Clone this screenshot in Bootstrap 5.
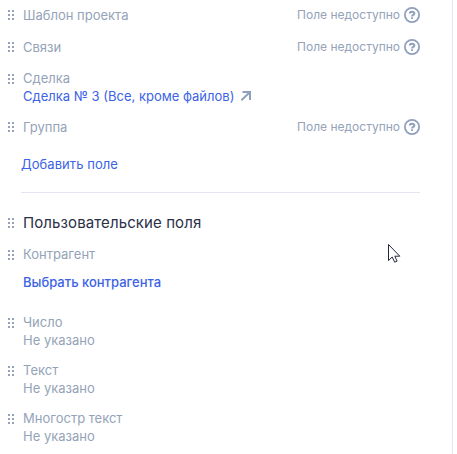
<!DOCTYPE html>
<html lang="ru">
<head>
<meta charset="utf-8">
<meta name="viewport" content="width=device-width, initial-scale=1">
<title>Поля</title>
<link href="https://cdn.jsdelivr.net/npm/bootstrap@5.3.0/dist/css/bootstrap.min.css" rel="stylesheet">
<style>
body{font-family:Inter,"Liberation Sans",sans-serif;font-size:13px;line-height:18px;color:#94a3b8;background:#fff}
.panel{width:453px;height:454px;border-right:1px solid #e4e4f4;padding:6px 32px 0 8px}
.field{margin-bottom:12px}
.gap-14{margin-bottom:14px}
.gap-13{margin-bottom:13px}
.gap-22{margin-bottom:22px}
.grip{width:6px;height:10px;margin:5px 9px 0 0;flex:none;fill:#94a3b8}
.grip.up{margin-top:4px}
.linkish{color:#3b63e6;text-decoration:none}
.add{margin:19px 0 0 13px;letter-spacing:.06px}
.rule{height:1px;background:#e4e4f4;margin:19px 0 20px 13px}
.title{font-size:15px;line-height:20px;letter-spacing:.1px;color:#2b3047;margin:0;font-weight:400}
.hint{font-size:12px}
.help{width:16px;height:16px;margin:1px 0 0 4px}
.pick{font-weight:500}
.pick-row{margin-top:10px}
.outlink{margin-left:7px}
.pointer{left:388px;top:243px}
</style>
</head>
<body>
<main class="panel position-relative overflow-hidden">
<svg width="0" height="0" class="position-absolute"><defs>
<g id="dots"><path d="M0 0h2v2H0zM4 0h2v2H4zM0 4h2v2H0zM4 4h2v2H4zM0 8h2v2H0zM4 8h2v2H4z"/></g>
<g id="help" fill="none" stroke="#8fa0bd"><circle cx="8" cy="8" r="7.1" stroke-width="1.8"/><path d="M5.7 6.5C5.8 5.2 6.8 4.7 8 4.7s2.4.6 2.4 1.8c0 1.4-2.3 1.3-2.3 2.9" stroke-width="1.9"/><path d="M7.1 11.2H9" stroke-width="1.8"/></g>
</defs></svg>
<div class="field gap-14 d-flex"><svg class="grip up"><use href="#dots"/></svg><span>Шаблон проекта</span><span class="hint ms-auto">Поле недоступно</span><svg class="help"><use href="#help"/></svg></div>
<div class="field gap-13 d-flex"><svg class="grip up"><use href="#dots"/></svg><span>Связи</span><span class="hint ms-auto">Поле недоступно</span><svg class="help"><use href="#help"/></svg></div>
<div class="field gap-13 d-flex"><svg class="grip"><use href="#dots"/></svg><div><div>Сделка</div><div class="d-flex align-items-center"><a class="linkish" href="#">Сделка № 3 (Все, кроме файлов)</a><svg class="outlink" width="11" height="10" fill="none" stroke="#8fa0bd" stroke-width="2"><path d="M1.5 1H9v8M9 1 .3 9.3"/></svg></div></div></div>
<div class="d-flex"><svg class="grip up"><use href="#dots"/></svg><span>Группа</span><span class="hint ms-auto">Поле недоступно</span><svg class="help"><use href="#help"/></svg></div>
<div class="add"><a class="linkish" href="#">Добавить поле</a></div>
<div class="rule"></div>
<div class="field d-flex"><svg class="grip"><use href="#dots"/></svg><h2 class="title">Пользовательские поля</h2></div>
<div class="field gap-22 d-flex"><svg class="grip"><use href="#dots"/></svg><div><div>Контрагент</div><div class="pick-row"><a class="linkish pick" href="#">Выбрать контрагента</a></div></div></div>
<div class="field d-flex"><svg class="grip"><use href="#dots"/></svg><div><div>Число</div><div>Не указано</div></div></div>
<div class="field d-flex"><svg class="grip"><use href="#dots"/></svg><div><div>Текст</div><div>Не указано</div></div></div>
<div class="field d-flex"><svg class="grip"><use href="#dots"/></svg><div><div>Многостр текст</div><div>Не указано</div></div></div>
<svg class="pointer position-absolute" width="14" height="21"><path d="M.5 1.5v16l3.7-3.5 2.5 5.2 2.4-1.1-2.3-4.9h5z" fill="#fff" stroke="#25283a"/></svg>
</main>
<script src="https://cdn.jsdelivr.net/npm/bootstrap@5.3.0/dist/js/bootstrap.bundle.min.js"></script>
</body>
</html>
